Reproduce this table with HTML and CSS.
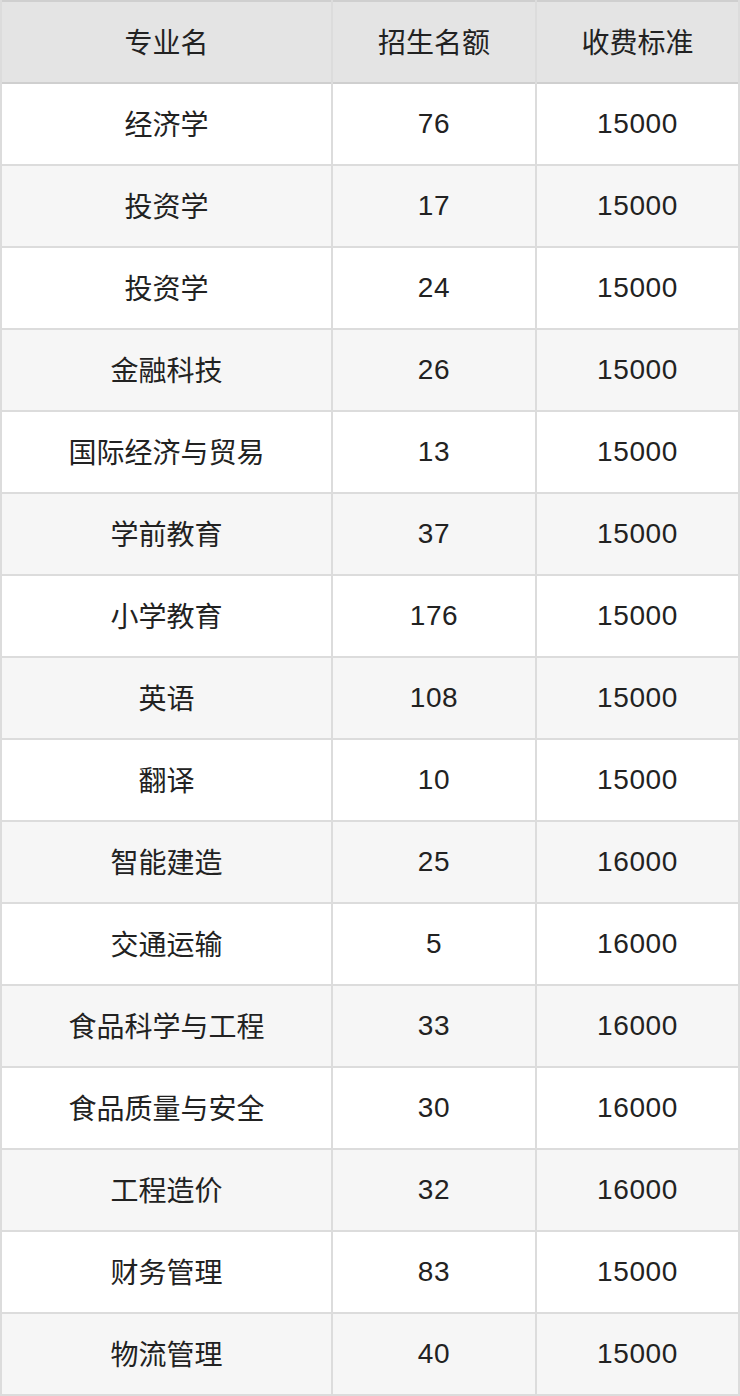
FILE: index.html
```html
<!DOCTYPE html>
<html lang="zh-CN">
<head>
<meta charset="utf-8">
<title>专业招生</title>
<link rel="stylesheet" href="styles.css">
</head>
<body>
<table class="plan">
  <thead>
    <tr><th class="c1 name">专业名</th><th class="c2 name">招生名额</th><th class="c3 name">收费标准</th></tr>
  </thead>
  <tbody>
    <tr><td class="name">经济学</td><td class="num">76</td><td class="num">15000</td></tr>
    <tr><td class="name">投资学</td><td class="num">17</td><td class="num">15000</td></tr>
    <tr><td class="name">投资学</td><td class="num">24</td><td class="num">15000</td></tr>
    <tr><td class="name">金融科技</td><td class="num">26</td><td class="num">15000</td></tr>
    <tr><td class="name">国际经济与贸易</td><td class="num">13</td><td class="num">15000</td></tr>
    <tr><td class="name">学前教育</td><td class="num">37</td><td class="num">15000</td></tr>
    <tr><td class="name">小学教育</td><td class="num">176</td><td class="num">15000</td></tr>
    <tr><td class="name">英语</td><td class="num">108</td><td class="num">15000</td></tr>
    <tr><td class="name">翻译</td><td class="num">10</td><td class="num">15000</td></tr>
    <tr><td class="name">智能建造</td><td class="num">25</td><td class="num">16000</td></tr>
    <tr><td class="name">交通运输</td><td class="num">5</td><td class="num">16000</td></tr>
    <tr><td class="name">食品科学与工程</td><td class="num">33</td><td class="num">16000</td></tr>
    <tr><td class="name">食品质量与安全</td><td class="num">30</td><td class="num">16000</td></tr>
    <tr><td class="name">工程造价</td><td class="num">32</td><td class="num">16000</td></tr>
    <tr><td class="name">财务管理</td><td class="num">83</td><td class="num">15000</td></tr>
    <tr><td class="name">物流管理</td><td class="num">40</td><td class="num">15000</td></tr>
  </tbody>
</table>
</body>
</html>
```
FILE: styles.css
```css
html, body {
  margin: 0;
  padding: 0;
  background: #ffffff;
}

.plan {
  width: 740px;
  border-collapse: separate;
  border-spacing: 2px;
  background: #dcdcdc;
  table-layout: fixed;
  font-family: "Liberation Sans", "Noto Sans CJK SC", sans-serif;
  font-size: 28px;
  color: #222222;
}

.plan th,
.plan td {
  height: 80px;
  padding: 0;
  text-align: center;
  vertical-align: middle;
  font-weight: normal;
  box-sizing: border-box;
}

.plan th {
  background: #e4e4e4;
  box-shadow: 0 -2px 0 #cfcfcf, 0 2px 0 #cfcfcf;
}

.plan .c1 { width: 329px; }
.plan .c2 { width: 202px; }
.plan .c3 { width: 201px; }

.plan tbody tr:nth-child(odd) td { background: #ffffff; }
.plan tbody tr:nth-child(even) td { background: #f6f6f6; }

.plan .name {
  padding-bottom: 3px;
}

.plan .num {
  letter-spacing: 0.6px;
}
```
